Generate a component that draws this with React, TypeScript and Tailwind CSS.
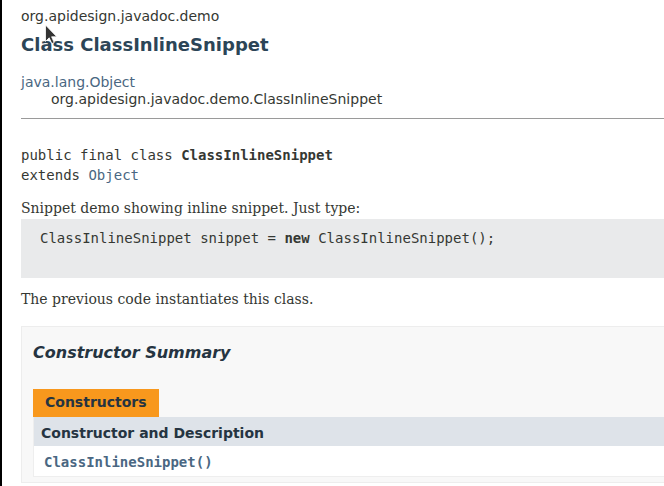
export default function App() {
  return (
    <div className="relative h-[486px] w-[664px] overflow-hidden border-l-2 border-black bg-white font-['DejaVu_Sans',sans-serif] text-[14px] text-[#353833]">
      <div className="w-[760px] pl-[19px]">
        {/* header */}
        <div className="pt-[8px] leading-[16px]">org.apidesign.javadoc.demo</div>
        <h2 className="mt-[10px] text-[18px] font-bold leading-[21px] text-[#2c4557]">Class ClassInlineSnippet</h2>

        {/* inheritance */}
        <div className="mt-[19px] leading-[17px]">
          <a className="text-[#4a6782]">java.lang.Object</a>
          <div className="pl-[30px]">org.apidesign.javadoc.demo.ClassInlineSnippet</div>
        </div>
        <hr className="mt-[10px] border-t border-[#9a9a9a]" />

        {/* signature */}
        <pre className="mt-[26px] font-['DejaVu_Sans_Mono',monospace] text-[14px] leading-[20px]">
          public final class <b>ClassInlineSnippet</b>
          {"\n"}extends <a className="text-[#4a6782]">Object</a>
        </pre>

        <div className="mt-[14px] font-['DejaVu_Serif',serif] leading-[19px]">Snippet demo showing inline snippet. Just type:</div>
        <pre className="mt-[1px] h-[59px] bg-[#e9eaeb] pl-[19px] pt-[10px] font-['DejaVu_Sans_Mono',monospace] leading-[19px]">
          ClassInlineSnippet snippet = <b>new</b> ClassInlineSnippet();
        </pre>
        <div className="mt-[12px] font-['DejaVu_Serif',serif] leading-[19px]">The previous code instantiates this class.</div>

        {/* constructor summary */}
        <div className="mt-[17px] border border-[#ededed] bg-[#f8f8f8] pb-[5px] pl-[11px]">
          <h3 className="pt-[16px] text-[16px] font-bold italic leading-[19px] text-[#253441]">Constructor Summary</h3>
          <div className="mt-[27px]">
            <div className="inline-block bg-[#f8981d] px-[12px] pt-[5px] pb-[7px] font-bold leading-[16px] text-[#253441]">Constructors</div>
            <div className="border-l border-[#eeeeee]">
              <div className="h-[29px] bg-[#dee3e9] pl-[7px] pt-[8px] font-bold leading-[16px] text-[#253441]">Constructor and Description</div>
              <div className="h-[31px] border-b border-[#eeeeee] bg-white pl-[10px] pt-[8px] font-['DejaVu_Sans_Mono',monospace] font-bold leading-[16px] text-[#4a6782]">
                ClassInlineSnippet()
              </div>
            </div>
          </div>
        </div>
      </div>

      {/* mouse pointer */}
      <svg className="absolute left-[42px] top-[24px]" width="14" height="21" viewBox="0 0 14 21">
        <path d="M1.5 1 L1.5 17.5 L5.2 13.8 L7.8 19.6 L10.2 18.6 L7.6 12.8 L12.8 12.8 Z" fill="#333333" stroke="#ffffff" strokeWidth="0.8" />
      </svg>
    </div>
  );
}
